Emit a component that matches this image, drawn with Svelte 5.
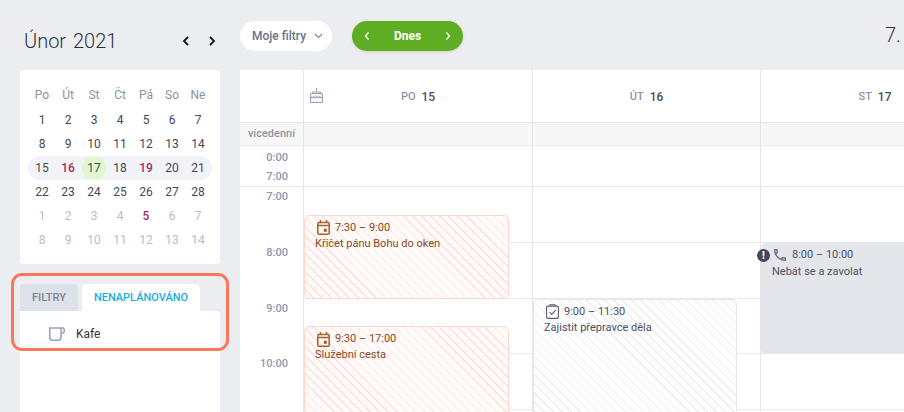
<script>
  const weekdays = ['Po', 'Út', 'St', 'Čt', 'Pá', 'So', 'Ne'];
  const weeks = [
    [1, 2, 3, 4, 5, 6, 7],
    [8, 9, 10, 11, 12, 13, 14],
    [15, 16, 17, 18, 19, 20, 21],
    [22, 23, 24, 25, 26, 27, 28],
    [1, 2, 3, 4, 5, 6, 7],
    [8, 9, 10, 11, 12, 13, 14]
  ];
  const marked = (w, d) => (w === 2 && (d === 16 || d === 19)) || (w === 4 && d === 5);

  const hourHeight = 55.75;
  const hours = ['7:00', '8:00', '9:00', '10:00'];
  const slots = [7, 8, 9, 10, 11];

  const days = [
    {
      name: 'PO', num: 15, birthday: true,
      events: [
        { kind: 'orange', icon: 'cal', from: 7.5, to: 9, time: '7:30 – 9:00', title: 'Křičet pánu Bohu do oken' },
        { kind: 'orange', icon: 'cal', from: 9.5, to: 17, time: '9:30 – 17:00', title: 'Služební cesta' }
      ]
    },
    {
      name: 'ÚT', num: 16,
      events: [
        { kind: 'grey', icon: 'task', from: 9, to: 11.5, time: '9:00 – 11:30', title: 'Zajistit přepravce děla' }
      ]
    },
    {
      name: 'ST', num: 17,
      events: [
        { kind: 'solid', icon: 'phone', from: 8, to: 10, time: '8:00 – 10:00', title: 'Nebát se a zavolat', alert: true }
      ]
    }
  ];

  const evStyle = (e) => `top:${(e.from - 7) * hourHeight}px;height:${(e.to - e.from) * hourHeight}px`;
</script>

<div class="page">
  <aside class="side">
    <div class="month-head">
      <h2>Únor 2021</h2>
      <div class="month-nav">
        <svg width="8" height="12" viewBox="0 0 8 12"><path d="M6 2 2 6l4 4" /></svg>
        <svg width="8" height="12" viewBox="0 0 8 12"><path d="M2 2l4 4-4 4" /></svg>
      </div>
    </div>

    <div class="picker">
      <div class="row head">
        {#each weekdays as d}<span>{d}</span>{/each}
      </div>
      {#each weeks as week, w}
        <div class="row" class:current={w === 2} class:muted={w > 3}>
          {#each week as d}
            <span class:today={w === 2 && d === 17} class:marked={marked(w, d)}>{d}</span>
          {/each}
        </div>
      {/each}
    </div>

    <div class="tabs">
      <button class="tab">FILTRY</button>
      <button class="tab active">NENAPLÁNOVÁNO</button>
    </div>
    <div class="tab-panel">
      <div class="todo">
        <svg width="16" height="14" viewBox="0 0 16 14" fill="none" stroke="#99a1b5" stroke-width="1.500">
          <path d="M.8 1h11.200v9.400a2.800 2.800 0 0 1-2.800 2.800H3.600a2.800 2.800 0 0 1-2.800-2.800z" />
          <path d="M12 1h1.600a1.600 1.600 0 0 1 1.600 1.600v2a1.600 1.600 0 0 1-1.600 1.600H12" />
        </svg>
        <span>Kafe</span>
      </div>
      <div class="highlight"></div>
    </div>
  </aside>

  <main class="main">
    <div class="toolbar">
      <button class="filters">
        Moje filtry
        <svg width="9" height="6" viewBox="0 0 9 6"><path d="M1 1l3.500 3.500L8 1" /></svg>
      </button>
      <div class="today-nav">
        <svg width="6" height="10" viewBox="0 0 6 10"><path d="M4.500 1.500 1.500 5l3 3.500" /></svg>
        <span>Dnes</span>
        <svg width="6" height="10" viewBox="0 0 6 10"><path d="M1.500 1.500 4.500 5l-3 3.500" /></svg>
      </div>
      <div class="range">7.</div>
    </div>

    <div class="cal">
      <div class="cal-row header">
        <div class="gutter"></div>
        {#each days as day}
          <div class="day-head">
            {#if day.birthday}
              <svg class="cake" width="13" height="15" viewBox="0 0 13 15" fill="none" stroke="#99a1b5" stroke-width="1.100">
                <path d="M6.500 0v3.500" />
                <path d="M2.500 6V4h8v2" />
                <path d="M.6 6.500a1 1 0 0 1 1-1h9.800a1 1 0 0 1 1 1v8H.6z" />
                <path d="M.6 8.500c1 1.800 2 1.800 3 0 1 1.800 2 1.800 3 0 1 1.800 2 1.800 3 0 1 1.800 2 1.800 3 0" />
              </svg>
            {/if}
            <span class="dname">{day.name}</span><span class="dnum">{day.num}</span>
          </div>
        {/each}
      </div>

      <div class="cal-row multi">
        <div class="gutter">vícedenní</div>
        {#each days as day}<div class="cell"></div>{/each}
      </div>

      <div class="cal-row collapsed">
        <div class="gutter"><span>0:00</span><span>7:00</span></div>
        {#each days as day}<div class="cell"></div>{/each}
      </div>

      <div class="cal-row body">
        <div class="gutter">
          {#each hours as h}<div class="hour-label">{h}</div>{/each}
        </div>
        {#each days as day}
          <div class="day-col">
            {#each slots as s}<div class="hour"></div>{/each}
            {#each day.events as e}
              <div class="event {e.kind}" style={evStyle(e)}>
                {#if e.alert}
                  <span class="alert">!</span>
                {/if}
                <div class="ev-time">
                  {#if e.icon === 'cal'}
                    <svg width="13" height="15" viewBox="0 0 13 15" fill="none" stroke="#a5602a" stroke-width="1.500">
                      <rect x=".8" y="2.500" width="11.400" height="11.700" rx="1" />
                      <path d="M.8 5.500h11.400M3.500 0v3M9.500 0v3" />
                      <rect x="6.800" y="8.800" width="3" height="3" fill="#a5602a" stroke="none" />
                    </svg>
                  {:else if e.icon === 'task'}
                    <svg width="13" height="15" viewBox="0 0 13 15" fill="none" stroke="#5a5f6c" stroke-width="1.100">
                      <rect x=".6" y="2.100" width="11.800" height="12.300" rx="1.300" />
                      <path d="M4 2.100V.8h5v1.300" />
                      <path d="M3.500 8.200l2.200 2.200 4-4.200" />
                    </svg>
                  {:else}
                    <svg class="phone" width="16" height="16" viewBox="0 0 24 24" fill="#666a77">
                      <path d="M6.540 5c.06.89.21 1.760.45 2.590l-1.200 1.200c-.41-1.200-.67-2.470-.76-3.790h1.510m9.860 12.020c.85.24 1.720.39 2.600.45v1.490c-1.320-.09-2.590-.35-3.800-.75l1.200-1.190M7.500 3H4c-.55 0-1 .45-1 1 0 9.390 7.610 17 17 17 .55 0 1-.45 1-1v-3.490c0-.55-.45-1-1-1-1.240 0-2.450-.2-3.570-.57-.1-.04-.21-.05-.31-.05-.26 0-.51.1-.71.29l-2.200 2.200c-2.830-1.450-5.150-3.760-6.590-6.590l2.200-2.200c.28-.28.36-.67.25-1.020C8.700 6.450 8.500 5.250 8.500 4c0-.55-.45-1-1-1z" />
                    </svg>
                  {/if}
                  <span>{e.time}</span>
                </div>
                <div class="ev-title">{e.title}</div>
              </div>
            {/each}
          </div>
        {/each}
      </div>
    </div>
  </main>
</div>

<style>
  :global(body) {
    margin: 0;
    background: #ebedf1;
    overflow: hidden;
  }

  .page {
    display: flex;
    height: 412px;
    overflow: hidden;
    font-family: Roboto, sans-serif;
    font-size: 12px;
    color: #434856;
  }

  .side {
    position: relative;
    width: 200px;
    flex-shrink: 0;
    padding: 0 20px;
    display: flex;
    flex-direction: column;
  }

  .month-head {
    height: 70px;
    display: flex;
    align-items: center;
    justify-content: space-between;
    padding: 12px 4px 0;
    box-sizing: border-box;
  }

  h2 {
    margin: 0;
    font-size: 20px;
    font-weight: 300;
    word-spacing: 2px;
    color: #2f3442;
  }

  .month-nav {
    display: flex;
    gap: 18px;
    margin-top: -1px;
  }

  .month-nav path {
    fill: none;
    stroke: #15181f;
    stroke-width: 1.800;
  }

  .picker {
    background: #fff;
    border-radius: 4px;
    padding: 13px 9px 12px;
  }

  .row {
    display: grid;
    grid-template-columns: repeat(7, 26px);
    height: 24px;
    align-items: center;
    text-align: center;
  }

  .row span {
    line-height: 24px;
  }

  .row.head {
    color: #8e8f9b;
    margin-bottom: 1px;
  }

  .row.current {
    background: #f2f3f6;
    border-radius: 12px;
    margin: 0 -1px;
    padding: 0 1px;
  }

  .row.muted {
    color: #b9bdc7;
  }

  .marked {
    color: #a82a5e;
    font-weight: 500;
  }

  .today {
    background: #dff8cf;
    border-radius: 50%;
    width: 24px;
    height: 24px;
    margin-left: 1px;
  }

  .tabs {
    display: flex;
    gap: 4px;
    margin-top: 20px;
    height: 27px;
  }

  .tab {
    border: 0;
    border-radius: 4px 4px 0 0;
    padding: 0 12px;
    background: #dde1e8;
    color: #7d8494;
    font: 500 11px Roboto, sans-serif;
  }

  .tab.active {
    background: #fff;
    color: #19aed6;
  }

  .tab-panel {
    position: relative;
    flex: 1;
    background: #fff;
    border-radius: 0 4px 0 0;
  }

  .todo {
    display: flex;
    align-items: center;
    gap: 11px;
    padding: 16px 0 0 29px;
    color: #2f3442;
  }

  .highlight {
    position: absolute;
    left: -9px;
    top: -38px;
    width: 218px;
    height: 78px;
    box-sizing: border-box;
    border: 3px solid #f9785b;
    border-radius: 11px;
  }

  .main {
    flex: 1;
    min-width: 0;
    overflow: hidden;
  }

  .toolbar {
    height: 70px;
    display: flex;
    align-items: center;
    box-sizing: border-box;
    padding-top: 2px;
  }

  .filters {
    display: flex;
    align-items: center;
    gap: 8px;
    flex-shrink: 0;
    width: 92px;
    height: 30px;
    padding: 0 0 0 12px;
    border: 0;
    border-radius: 15px;
    background: #fff;
    color: #6c7284;
    font: 500 12px Roboto, sans-serif;
    white-space: nowrap;
  }

  .filters path {
    fill: none;
    stroke: #7d8494;
    stroke-width: 1.100;
  }

  .today-nav {
    display: flex;
    align-items: center;
    justify-content: space-between;
    flex-shrink: 0;
    width: 111px;
    height: 30px;
    margin-left: 20px;
    padding: 0 12px;
    box-sizing: border-box;
    border-radius: 15px;
    background: #5fad22;
    color: #fff;
    font-weight: 700;
    box-shadow: 0 1px 3px rgba(0, 0, 0, 0.12);
  }

  .today-nav path {
    fill: none;
    stroke: #fff;
    stroke-width: 1.300;
  }

  .range {
    margin-left: 422px;
    margin-top: -2px;
    font-size: 20px;
    font-weight: 300;
    color: #2f3442;
    white-space: nowrap;
  }

  .cal {
    background: #fff;
    width: 900px;
  }

  .cal-row {
    display: grid;
    grid-template-columns: 64px 229px 228px 229px;
    border-bottom: 1px solid #e8e9ee;
    box-sizing: border-box;
  }

  .cal-row > * {
    border-right: 1px solid #e3e4ec;
    box-sizing: border-box;
  }

  .header {
    height: 53px;
  }

  .day-head {
    position: relative;
    display: flex;
    align-items: center;
    justify-content: center;
    gap: 6px;
    padding-top: 1px;
    font-weight: 500;
  }

  .cake {
    position: absolute;
    left: 6px;
    top: 18px;
  }

  .dname {
    font-size: 11px;
    color: #8e94a6;
  }

  .dnum {
    color: #4a4e5a;
  }

  .multi {
    height: 23px;
    background: #f7f7f8;
  }

  .multi .gutter {
    font-size: 11px;
    font-weight: 500;
    color: #8e93a3;
    text-align: center;
    line-height: 22px;
  }

  .collapsed {
    height: 41px;
  }

  .collapsed .gutter {
    display: flex;
    flex-direction: column;
    align-items: flex-end;
    gap: 5px;
    padding: 5px 15px 0 0;
    font-size: 11px;
    font-weight: 500;
    color: #8f97ab;
    line-height: 14px;
  }

  .body {
    border-bottom: 0;
  }

  .hour-label {
    height: 55.750px;
    padding: 3px 15px 0 0;
    box-sizing: border-box;
    text-align: right;
    font-size: 11px;
    font-weight: 500;
    color: #8f97ab;
    line-height: 14px;
  }

  .day-col {
    position: relative;
  }

  .hour {
    height: 55.750px;
    box-sizing: border-box;
    border-bottom: 1px solid #e8e9ee;
  }

  .event {
    position: absolute;
    left: 0;
    width: 205px;
    box-sizing: border-box;
    padding: 4px 6px 0 10px;
    border-radius: 5px;
    font-size: 11px;
    line-height: 16px;
  }

  .event.orange {
    border: 1px solid #ffd6ca;
    color: #86481a;
    background: repeating-linear-gradient(45deg, #fffbfa 0 5.400px, #ffe0d8 5.400px 6.400px);
  }

  .event.grey {
    width: 204px;
    border: 1px solid #e6e7ec;
    color: #4d515d;
    background: repeating-linear-gradient(45deg, #fdfdfd 0 5.400px, #eeeff2 5.400px 6.400px);
  }

  .event.solid {
    width: 228px;
    background: #e5e6ec;
    color: #4d515d;
    padding: 4px 6px 0 11px;
    border-radius: 5px 0 0 5px;
  }

  .event.solid .ev-title {
    margin-top: 1px;
  }

  .ev-time {
    display: flex;
    align-items: center;
    gap: 5px;
    padding-left: 2px;
  }

  .phone {
    margin: 0 -1px 0 -2px;
  }

  .alert {
    position: absolute;
    left: -4px;
    top: 6px;
    width: 13px;
    height: 13px;
    border-radius: 50%;
    background: #44475a;
    color: #fff;
    font-size: 10px;
    font-weight: 900;
    line-height: 13px;
    text-align: center;
  }
</style>
